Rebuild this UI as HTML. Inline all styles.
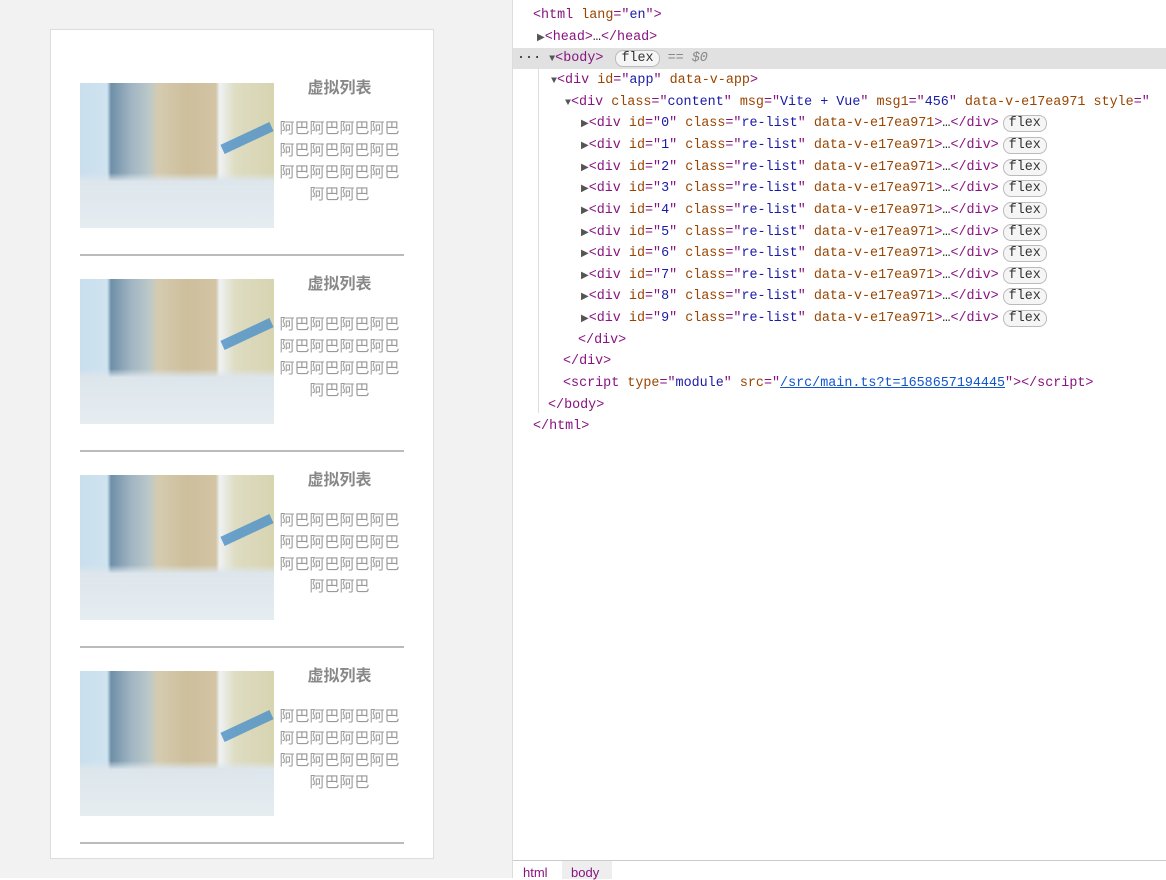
<!DOCTYPE html><html><head><meta charset="utf-8"><style>
body{margin:0;width:1166px;height:878px;overflow:hidden;position:relative;background:#fff;font-family:"Liberation Sans","Noto Sans CJK SC",sans-serif}
#left{position:absolute;left:0;top:0;width:512px;height:878px;background:#f2f2f2}
#card{position:absolute;left:50px;top:29px;width:382px;height:828px;background:#fff;border:1px solid #ddd}
.item{position:absolute;left:80px;width:324px;height:196px}
.img{position:absolute;left:0;top:0;width:194px;height:145px;background:
linear-gradient(180deg,rgba(255,255,255,0) 0,rgba(255,255,255,0) 62%,#dde6ec 68%,#e6edf1 100%),
linear-gradient(90deg,#c9dfee 0,#cfe2ef 14%,#6e8fa8 16%,#9fb4c2 26%,#bcc9c9 36%,#d5cbb0 40%,#cdbf9c 55%,#d2c4a4 70%,#eef2f4 72%,#dedcc2 80%,#d7d4b0 100%)}
.img:after{content:"";position:absolute;left:140px;top:50px;width:54px;height:10px;background:#4b90c8;transform:rotate(-25deg);opacity:.8}
.t{position:absolute;left:197px;width:125px;text-align:center;color:#888}
.h{top:-5px;font-weight:bold;font-size:16px;line-height:22px}
.p{top:35px;font-size:15px;line-height:22px;color:#999}
.line{position:absolute;left:0;top:171px;width:324px;height:2px;background:#bbb}
#dev{position:absolute;left:512px;top:0;width:654px;height:878px;border-left:1px solid #ddd;font-family:"Liberation Mono",monospace;font-size:13.4px;color:#222}
.r{position:absolute;left:0;height:21px;line-height:21px;white-space:pre;width:654px}
.tg{color:#881280}.an{color:#994500}.av{color:#1a1aa6}
.fx{display:inline-block;border:1px solid #bbb;border-radius:8px;padding:0 5px;line-height:15px;color:#333;background:#f5f5f5;margin-left:4px}
.ar{color:#555;font-size:10px}
#bar{position:absolute;left:0;top:860px;width:654px;height:18px;border-top:1px solid #ccc;font-family:"Liberation Sans",sans-serif;font-size:13px;color:#881280}
</style></head><body>
<div id="left"><div id="card"></div>
<div class="item" style="top:83px"><div class="img"></div><div class="t h">虚拟列表</div><div class="t p">阿巴阿巴阿巴阿巴阿巴阿巴阿巴阿巴阿巴阿巴阿巴阿巴阿巴阿巴</div><div class="line"></div></div>
<div class="item" style="top:279px"><div class="img"></div><div class="t h">虚拟列表</div><div class="t p">阿巴阿巴阿巴阿巴阿巴阿巴阿巴阿巴阿巴阿巴阿巴阿巴阿巴阿巴</div><div class="line"></div></div>
<div class="item" style="top:475px"><div class="img"></div><div class="t h">虚拟列表</div><div class="t p">阿巴阿巴阿巴阿巴阿巴阿巴阿巴阿巴阿巴阿巴阿巴阿巴阿巴阿巴</div><div class="line"></div></div>
<div class="item" style="top:671px"><div class="img"></div><div class="t h">虚拟列表</div><div class="t p">阿巴阿巴阿巴阿巴阿巴阿巴阿巴阿巴阿巴阿巴阿巴阿巴阿巴阿巴</div><div class="line"></div></div>
</div>
<div id="dev">
<div class="r" style="top:5px;padding-left:20px"><span class="tg">&lt;html</span> <span class="an">lang</span><span class="tg">="</span><span class="av">en</span><span class="tg">"&gt;</span></div>
<div class="r" style="top:27px;padding-left:24px"><span class="ar">▶</span><span class="tg">&lt;head&gt;</span>…<span class="tg">&lt;/head&gt;</span></div>
<div class="r" style="top:48px;background:#e1e1e1;padding-left:4px">··· <span class="ar">▼</span><span class="tg">&lt;body&gt;</span> <span class="fx">flex</span> <span style="color:#888">== <i>$0</i></span></div>
<div class="r" style="top:70px;padding-left:38px"><span class="ar">▼</span><span class="tg">&lt;div</span> <span class="an">id</span><span class="tg">="</span><span class="av">app</span><span class="tg">"</span> <span class="an">data-v-app</span><span class="tg">&gt;</span></div>
<div class="r" style="top:92px;padding-left:52px"><span class="ar">▼</span><span class="tg">&lt;div</span> <span class="an">class</span><span class="tg">="</span><span class="av">content</span><span class="tg">"</span> <span class="an">msg</span><span class="tg">="</span><span class="av">Vite + Vue</span><span class="tg">"</span> <span class="an">msg1</span><span class="tg">="</span><span class="av">456</span><span class="tg">"</span> <span class="an">data-v-e17ea971</span> <span class="an">style</span><span class="tg">="</span></div>
<div class="r" style="top:113px;padding-left:68px"><span class="ar">▶</span><span class="tg">&lt;div</span> <span class="an">id</span><span class="tg">="</span><span class="av">0</span><span class="tg">"</span> <span class="an">class</span><span class="tg">="</span><span class="av">re-list</span><span class="tg">"</span> <span class="an">data-v-e17ea971</span><span class="tg">&gt;</span>…<span class="tg">&lt;/div&gt;</span><span class="fx">flex</span></div>
<div class="r" style="top:135px;padding-left:68px"><span class="ar">▶</span><span class="tg">&lt;div</span> <span class="an">id</span><span class="tg">="</span><span class="av">1</span><span class="tg">"</span> <span class="an">class</span><span class="tg">="</span><span class="av">re-list</span><span class="tg">"</span> <span class="an">data-v-e17ea971</span><span class="tg">&gt;</span>…<span class="tg">&lt;/div&gt;</span><span class="fx">flex</span></div>
<div class="r" style="top:157px;padding-left:68px"><span class="ar">▶</span><span class="tg">&lt;div</span> <span class="an">id</span><span class="tg">="</span><span class="av">2</span><span class="tg">"</span> <span class="an">class</span><span class="tg">="</span><span class="av">re-list</span><span class="tg">"</span> <span class="an">data-v-e17ea971</span><span class="tg">&gt;</span>…<span class="tg">&lt;/div&gt;</span><span class="fx">flex</span></div>
<div class="r" style="top:178px;padding-left:68px"><span class="ar">▶</span><span class="tg">&lt;div</span> <span class="an">id</span><span class="tg">="</span><span class="av">3</span><span class="tg">"</span> <span class="an">class</span><span class="tg">="</span><span class="av">re-list</span><span class="tg">"</span> <span class="an">data-v-e17ea971</span><span class="tg">&gt;</span>…<span class="tg">&lt;/div&gt;</span><span class="fx">flex</span></div>
<div class="r" style="top:200px;padding-left:68px"><span class="ar">▶</span><span class="tg">&lt;div</span> <span class="an">id</span><span class="tg">="</span><span class="av">4</span><span class="tg">"</span> <span class="an">class</span><span class="tg">="</span><span class="av">re-list</span><span class="tg">"</span> <span class="an">data-v-e17ea971</span><span class="tg">&gt;</span>…<span class="tg">&lt;/div&gt;</span><span class="fx">flex</span></div>
<div class="r" style="top:222px;padding-left:68px"><span class="ar">▶</span><span class="tg">&lt;div</span> <span class="an">id</span><span class="tg">="</span><span class="av">5</span><span class="tg">"</span> <span class="an">class</span><span class="tg">="</span><span class="av">re-list</span><span class="tg">"</span> <span class="an">data-v-e17ea971</span><span class="tg">&gt;</span>…<span class="tg">&lt;/div&gt;</span><span class="fx">flex</span></div>
<div class="r" style="top:243px;padding-left:68px"><span class="ar">▶</span><span class="tg">&lt;div</span> <span class="an">id</span><span class="tg">="</span><span class="av">6</span><span class="tg">"</span> <span class="an">class</span><span class="tg">="</span><span class="av">re-list</span><span class="tg">"</span> <span class="an">data-v-e17ea971</span><span class="tg">&gt;</span>…<span class="tg">&lt;/div&gt;</span><span class="fx">flex</span></div>
<div class="r" style="top:265px;padding-left:68px"><span class="ar">▶</span><span class="tg">&lt;div</span> <span class="an">id</span><span class="tg">="</span><span class="av">7</span><span class="tg">"</span> <span class="an">class</span><span class="tg">="</span><span class="av">re-list</span><span class="tg">"</span> <span class="an">data-v-e17ea971</span><span class="tg">&gt;</span>…<span class="tg">&lt;/div&gt;</span><span class="fx">flex</span></div>
<div class="r" style="top:286px;padding-left:68px"><span class="ar">▶</span><span class="tg">&lt;div</span> <span class="an">id</span><span class="tg">="</span><span class="av">8</span><span class="tg">"</span> <span class="an">class</span><span class="tg">="</span><span class="av">re-list</span><span class="tg">"</span> <span class="an">data-v-e17ea971</span><span class="tg">&gt;</span>…<span class="tg">&lt;/div&gt;</span><span class="fx">flex</span></div>
<div class="r" style="top:308px;padding-left:68px"><span class="ar">▶</span><span class="tg">&lt;div</span> <span class="an">id</span><span class="tg">="</span><span class="av">9</span><span class="tg">"</span> <span class="an">class</span><span class="tg">="</span><span class="av">re-list</span><span class="tg">"</span> <span class="an">data-v-e17ea971</span><span class="tg">&gt;</span>…<span class="tg">&lt;/div&gt;</span><span class="fx">flex</span></div>
<div class="r" style="top:330px;padding-left:65px"><span class="tg">&lt;/div&gt;</span></div>
<div class="r" style="top:351px;padding-left:50px"><span class="tg">&lt;/div&gt;</span></div>
<div class="r" style="top:373px;padding-left:50px"><span class="tg">&lt;script</span> <span class="an">type</span><span class="tg">="</span><span class="av">module</span><span class="tg">"</span> <span class="an">src</span><span class="tg">="</span><span style="color:#1155cc;text-decoration:underline">/src/main.ts?t=1658657194445</span><span class="tg">"&gt;&lt;/script&gt;</span></div>
<div class="r" style="top:395px;padding-left:35px"><span class="tg">&lt;/body&gt;</span></div>
<div class="r" style="top:416px;padding-left:20px"><span class="tg">&lt;/html&gt;</span></div>
<div style="position:absolute;left:25px;top:68px;width:1px;height:345px;background:#ddd"></div>
<div id="bar"><span style="position:absolute;left:10px;top:4px">html</span><span style="position:absolute;left:49px;top:0;height:18px;width:50px;background:#eee"></span><span style="position:absolute;left:58px;top:4px">body</span></div>
</div>
</body></html>
